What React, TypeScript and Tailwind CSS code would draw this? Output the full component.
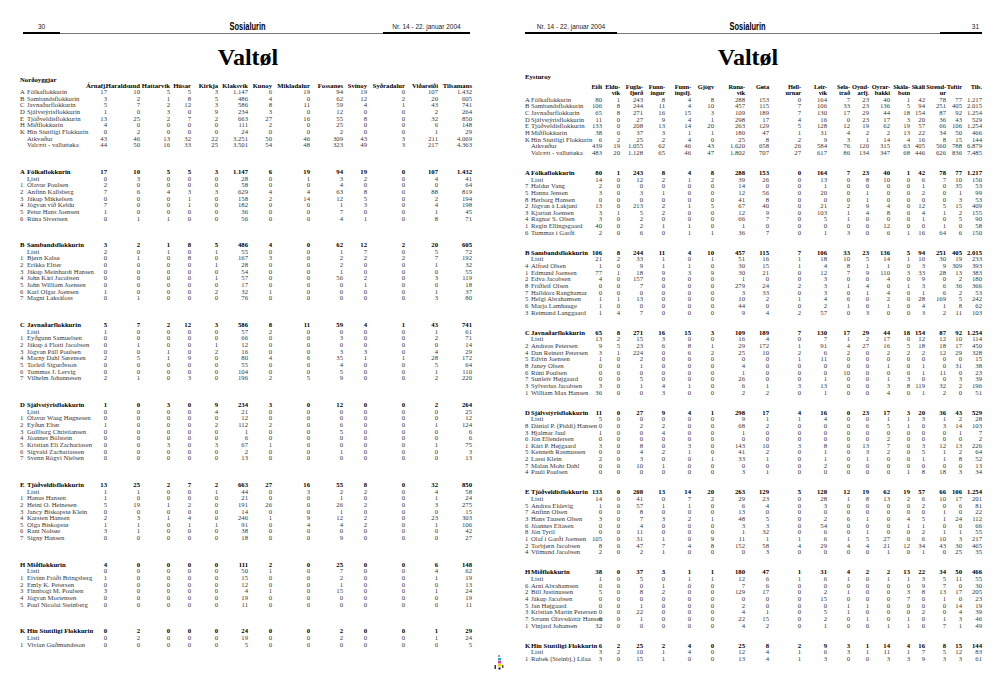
import React from 'react';

type Line = [string, string, string];
type Section = { head: Line; rows: Line[] };

// column templates (label column + one column per municipality)
const L_GRID = 'grid-cols-[68px_19px_33px_30px_21px_27px_30px_24px_38px_33px_24px_38px_33px_34px]';
const R_GRID =
  'grid-cols-[68px_9px_18px_23px_22px_26px_23px_31px_24px_32px_26px_23px_19px_21px_20px_15px_21px_16px_20px]';

const NORTH_COLS = [
  'Árnafj.', 'Haraldsund', 'Hattarvík', 'Húsar', 'Kirkja', 'Klaksvík', 'Kunoy',
  'Mikladalur', 'Fossanes', 'Svínoy', 'Syðradalur', 'Viðareiði', 'Tilsamans',
];

const NORTH_SUM: Line[] = [
  ['A', 'Fólkaflokkurin', '17 10 5 5 3 1.147 6 19 94 19 0 107 1.432'],
  ['B', 'Sambandsflokkurin', '3 2 1 8 5 486 4 0 62 12 2 20 605'],
  ['C', 'Javnaðarflokkurin', '5 7 2 12 3 586 8 11 59 4 1 43 741'],
  ['D', 'Sjálvstýrisflokkurin', '1 0 3 0 9 234 3 0 12 0 0 2 264'],
  ['E', 'Tjóðveldisflokkurin', '13 25 2 7 2 663 27 16 55 8 0 32 850'],
  ['H', 'Miðflokkurin', '4 0 0 0 0 111 2 0 25 0 0 6 148'],
  ['K', 'Hin Stuttligi Flokkurin', '0 2 0 0 0 24 0 0 2 0 0 1 29'],
  ['', 'Atkvøður', '43 46 13 32 22 3.251 50 46 309 43 3 211 4.069'],
  ['', 'Valrætt - valluttøka', '44 50 16 33 25 3.501 54 48 323 49 3 217 4.363'],
];

const NORTH: Section[] = [
  {
    head: NORTH_SUM[0],
    rows: [
      ['', 'Listi', '0 3 0 0 0 28 0 1 3 2 0 4 41'],
      ['1', 'Ólavur Poulsen', '2 0 0 0 0 58 0 0 4 0 0 0 64'],
      ['2', 'Anfinn Kallsberg', '7 6 4 3 3 629 4 4 63 8 0 88 819'],
      ['3', 'Jákup Mikkelsen', '0 0 0 1 0 158 2 14 12 5 0 2 194'],
      ['4', 'Jógvan við Keldu', '7 0 0 1 0 182 0 0 1 3 0 4 198'],
      ['5', 'Petur Hans Joensen', '1 0 0 0 0 36 0 0 7 0 0 1 45'],
      ['6', 'Rúna Sivertsen', '0 1 1 0 0 56 0 0 4 1 0 8 71'],
    ],
  },
  {
    head: NORTH_SUM[1],
    rows: [
      ['', 'Listi', '2 0 1 0 1 55 0 0 1 7 0 5 72'],
      ['1', 'Bjørn Kalsø', '0 1 0 8 0 167 3 0 2 2 2 7 192'],
      ['2', 'Erikka Eltter', '0 0 0 0 1 28 0 0 2 0 0 1 32'],
      ['3', 'Jákup Meinhardt Hansen', '0 0 0 0 0 54 0 0 1 0 0 0 55'],
      ['4', 'John Kári Jacobsen', '0 0 0 0 1 57 0 0 56 2 0 3 119'],
      ['5', 'John William Joensen', '0 0 0 0 0 17 0 0 0 1 0 0 18'],
      ['6', 'Karl Olgar Joensen', '1 0 0 0 2 32 1 0 0 0 0 1 37'],
      ['7', 'Magni Laksáfoss', '0 1 0 0 0 76 0 0 0 0 0 3 80'],
    ],
  },
  {
    head: NORTH_SUM[2],
    rows: [
      ['', 'Listi', '1 0 0 0 0 57 2 0 0 0 0 1 61'],
      ['1', 'Eyðgunn Samuelsen', '0 0 0 0 0 66 0 0 3 0 0 2 71'],
      ['2', 'Jákup á Flotti Jacobsen', '0 1 0 0 1 12 0 0 0 0 0 0 14'],
      ['3', 'Jógvan Páll Poulsen', '0 0 1 0 2 16 0 0 3 3 0 4 29'],
      ['4', 'Marny Dahl Sørensen', '2 5 1 9 0 80 4 6 35 1 1 28 172'],
      ['5', 'Torleif Sigurðsson', '0 0 0 0 0 55 0 0 4 0 0 5 64'],
      ['6', 'Tummas J. Lervig', '0 0 0 0 0 104 0 0 5 0 0 1 110'],
      ['7', 'Vilhelm Johannesen', '2 1 0 3 0 196 2 5 9 0 0 2 220'],
    ],
  },
  {
    head: NORTH_SUM[3],
    rows: [
      ['', 'Listi', '0 0 0 0 4 21 0 0 0 0 0 0 25'],
      ['1', 'Ólavur Waag Høgnesen', '0 0 0 0 0 12 0 0 0 0 0 0 12'],
      ['2', 'Eyðun Eltør', '1 0 0 0 2 112 2 0 6 0 0 1 124'],
      ['3', 'Gullborg Christiansen', '0 0 0 0 0 1 0 0 5 0 0 0 6'],
      ['4', 'Jóannes Bólstein', '0 0 0 0 0 6 0 0 0 0 0 0 6'],
      ['5', 'Kristian Eli Zachariasen', '0 0 3 0 3 67 1 0 0 0 0 1 75'],
      ['6', 'Sigvald Zachariassen', '0 0 0 0 0 2 0 0 1 0 0 0 3'],
      ['7', 'Svenn Rógvi Nielsen', '0 0 0 0 0 13 0 0 0 0 0 0 13'],
    ],
  },
  {
    head: NORTH_SUM[4],
    rows: [
      ['', 'Listi', '1 1 0 0 1 44 0 3 2 2 0 4 58'],
      ['1', 'Hanus Hansen', '1 0 0 0 0 21 0 0 1 0 0 1 24'],
      ['2', 'Heini O. Heinesen', '5 19 1 2 0 191 26 0 26 2 0 3 275'],
      ['3', 'Jancy Biskopstø Klein', '0 0 0 0 0 14 0 0 1 0 0 0 15'],
      ['4', 'Karsten Hansen', '2 3 1 4 0 246 1 9 12 2 0 23 303'],
      ['5', 'Olga Biskopstø', '1 1 0 1 1 91 0 4 4 2 0 1 106'],
      ['6', 'Rani Nolsøe', '3 1 0 0 0 38 0 0 0 0 0 0 42'],
      ['7', 'Signy Hansen', '0 0 0 0 0 18 0 0 9 0 0 0 27'],
    ],
  },
  {
    head: NORTH_SUM[5],
    rows: [
      ['', 'Listi', '0 0 0 0 0 50 1 0 7 0 0 4 62'],
      ['1', 'Eivinn Fróði Bringsberg', '1 0 0 0 0 15 0 0 2 0 0 1 19'],
      ['2', 'Emly K. Petersen', '0 0 0 0 0 12 0 0 1 0 0 0 13'],
      ['3', 'Finnbogi M. Poulsen', '3 0 0 0 0 4 1 0 15 0 0 1 24'],
      ['4', 'Jógvan Mortensen', '0 0 0 0 0 19 0 0 0 0 0 0 19'],
      ['5', 'Poul Nicolai Steinberg', '0 0 0 0 0 11 0 0 0 0 0 0 11'],
    ],
  },
  {
    head: NORTH_SUM[6],
    rows: [
      ['', 'Listi', '0 2 0 0 0 19 0 0 2 0 0 1 24'],
      ['1', 'Vivian Guðmundsson', '0 0 0 0 0 5 0 0 0 0 0 0 5'],
    ],
  },
];

const EAST_COLS: [string, string][] = [
  ['Eiði', ''], ['Eldu-', 'vík'], ['Fugla-', 'fjørð'], ['Funn-', 'ingur'], ['Funn-', 'ingsfj.'],
  ['Gjógv', ''], ['Runa-', 'vík'], ['Gøta', ''], ['Hell-', 'urnar'], ['Leir-', 'vík'],
  ['Sela-', 'trað'], ['Oynd-', 'arfj.'], ['Oyrar-', 'bakki'], ['Skála-', 'botn'], ['Skáli', ''],
  ['Strend-', 'ur'], ['Toftir', ''], ['Tils.', ''],
];

const EAST_SUM: Line[] = [
  ['A', 'Fólkaflokkurin', '80 1 243 8 4 8 288 153 0 164 7 23 40 1 42 78 77 1.217'],
  ['B', 'Sambandsflokkurin', '106 8 244 11 4 10 457 115 7 106 33 23 136 5 94 251 405 2.015'],
  ['C', 'Javnaðarflokkurin', '65 8 271 16 15 3 109 189 7 130 17 29 44 18 154 87 92 1.254'],
  ['D', 'Sjálvstýrisflokkurin', '11 0 27 9 4 1 298 17 4 16 0 23 17 3 20 36 43 529'],
  ['E', 'Tjóðveldisflokkurin', '133 0 208 13 14 20 263 129 5 128 12 19 62 19 57 66 106 1.254'],
  ['H', 'Miðflokkurin', '38 0 37 3 1 1 180 47 1 31 4 2 2 13 22 34 50 466'],
  ['K', 'Hin Stuttligi Flokkurin', '6 2 25 2 4 0 25 8 2 9 3 1 14 4 16 8 15 144'],
  ['', 'Atkvøður', '439 19 1.055 62 46 43 1.620 658 26 584 76 120 315 63 405 560 788 6.879'],
  ['', 'Valrætt - valluttøka', '483 20 1.128 65 46 47 1.802 707 27 617 86 134 347 68 446 626 836 7.485'],
];

const EAST: Section[] = [
  {
    head: EAST_SUM[0],
    rows: [
      ['', 'Listi', '14 0 12 2 1 2 39 26 0 13 0 8 10 0 6 7 10 150'],
      ['7', 'Haldur Vang', '2 0 0 0 0 0 14 0 0 1 0 0 0 0 1 0 35 53'],
      ['5', 'Hanna Jensen', '3 0 3 1 0 0 12 56 0 20 0 1 0 0 2 0 1 99'],
      ['8', 'Herborg Hansen', '0 0 0 0 0 0 41 8 0 0 0 1 0 0 0 0 3 53'],
      ['2', 'Jógvan á Lakjuni', '13 0 213 2 1 5 67 40 0 21 2 9 4 0 12 5 15 409'],
      ['3', 'Kjartan Joensen', '3 1 5 2 0 0 12 9 0 103 1 4 8 0 4 1 2 155'],
      ['4', 'Ragnar S. Olsen', '3 0 2 0 0 0 66 7 0 5 1 0 0 0 1 0 5 90'],
      ['1', 'Regin Ellingsgaard', '40 0 2 1 1 0 1 0 0 0 0 0 12 0 0 1 0 58'],
      ['6', 'Tummas í Garði', '2 0 6 0 1 1 36 7 0 1 3 0 6 1 16 64 6 150'],
    ],
  },
  {
    head: EAST_SUM[1],
    rows: [
      ['', 'Listi', '21 2 33 1 0 1 51 16 1 18 10 5 14 1 10 30 19 233'],
      ['4', 'Alfred Olsen', '1 0 9 1 1 0 30 15 1 4 8 1 1 0 3 9 309 393'],
      ['1', 'Edmund Joensen', '77 1 18 9 3 9 30 21 0 12 7 9 110 3 33 28 13 383'],
      ['2', 'Edva Jacobsen', '4 0 157 0 0 0 1 0 0 3 0 0 4 0 9 0 2 180'],
      ['8', 'Fríðleif Olsen', '0 0 7 0 0 0 279 24 2 3 1 4 0 1 3 6 36 366'],
      ['7', 'Halldóra Ranghamar', '0 0 0 0 0 0 3 33 0 3 0 1 4 0 1 6 2 53'],
      ['5', 'Helgi Abrahamsen', '1 1 13 0 0 0 10 2 1 4 6 0 2 0 28 169 5 242'],
      ['6', 'Marja Lamhauge', '1 0 0 0 0 0 44 0 0 2 1 0 1 0 4 1 8 62'],
      ['3', 'Reimund Langgaard', '1 4 7 0 0 0 9 4 2 57 0 3 0 0 3 2 11 103'],
    ],
  },
  {
    head: EAST_SUM[2],
    rows: [
      ['', 'Listi', '13 2 15 3 0 0 16 4 0 7 1 2 17 0 12 12 10 114'],
      ['2', 'Andreas Petersen', '9 5 23 6 8 1 29 172 1 91 4 27 16 5 18 18 17 450'],
      ['4', 'Dan Reinert Petersen', '3 1 224 0 6 2 25 10 2 6 2 0 2 2 2 12 29 328'],
      ['5', 'Edvin Joensen', '1 0 2 0 0 0 0 0 1 11 0 0 0 0 0 0 0 15'],
      ['8', 'Janey Olsen', '0 0 1 0 0 0 4 0 0 0 0 0 1 0 1 0 31 38'],
      ['6', 'Rúni Poulsen', '0 0 0 0 0 0 1 0 0 0 10 0 0 0 1 11 0 23'],
      ['7', 'Sunleiv Højgaard', '0 0 5 0 0 0 26 0 0 1 0 0 1 3 0 0 3 39'],
      ['3', 'Sylverius Jacobsen', '3 0 1 4 1 0 6 1 3 13 0 0 3 8 119 32 2 196'],
      ['1', 'William Max Hansen', '36 0 0 3 0 0 2 2 0 1 0 0 4 0 1 2 0 51'],
    ],
  },
  {
    head: EAST_SUM[3],
    rows: [
      ['', 'Listi', '5 0 0 0 0 0 9 1 1 4 0 0 1 1 3 1 2 28'],
      ['8', 'Dánial P. (Piddi) Hansen', '0 0 2 2 0 0 68 2 0 0 0 6 5 1 0 3 14 103'],
      ['3', 'Hjalmar Juul', '1 0 0 4 0 0 1 0 0 0 0 0 0 0 0 0 1 7'],
      ['6', 'Jón Ellendersen', '0 0 0 0 0 0 0 0 0 0 0 0 2 0 0 0 0 2'],
      ['1', 'Kári P. Højgaard', '3 0 8 0 3 0 143 10 3 8 0 13 7 0 3 12 13 226'],
      ['5', 'Kenneth Rasmussen', '0 0 4 2 1 0 41 2 0 1 0 3 2 0 5 1 2 64'],
      ['2', 'Lassi Klein', '2 0 3 0 0 1 33 1 0 1 0 1 0 0 1 1 8 52'],
      ['7', 'Malan Mohr Dahl', '0 0 10 1 0 0 0 0 0 2 0 0 0 0 0 0 0 13'],
      ['4', 'Pauli Poulsen', '0 0 0 0 0 0 3 1 0 0 0 0 0 1 8 18 3 34'],
    ],
  },
  {
    head: EAST_SUM[4],
    rows: [
      ['', 'Listi', '14 0 41 0 7 2 29 23 0 28 1 8 13 2 6 10 17 201'],
      ['5', 'Andrea Eldevig', '1 0 57 1 1 0 6 4 0 3 0 0 0 0 2 0 6 81'],
      ['7', 'Anfinn Olsen', '0 0 8 0 0 0 13 0 0 0 0 0 0 0 0 1 0 22'],
      ['3', 'Hans Tausen Olsen', '3 0 7 3 2 1 48 5 0 2 6 1 0 4 5 1 24 112'],
      ['6', 'Jóannes Eliasen', '0 0 4 0 0 0 3 3 0 54 0 0 0 1 1 0 0 66'],
      ['8', 'Jón Tyril', '0 0 11 0 0 0 1 32 0 6 0 1 0 0 2 1 1 55'],
      ['1', 'Olaf í Garði Joensen', '105 0 31 1 0 9 11 1 1 6 1 5 27 0 6 10 3 217'],
      ['2', 'Torbjørn Jacobsen', '8 0 47 7 4 8 152 58 4 29 4 4 21 12 34 43 30 465'],
      ['4', 'Vilmund Jacobsen', '2 0 2 1 0 0 0 3 0 0 0 0 1 0 1 0 25 35'],
    ],
  },
  {
    head: EAST_SUM[5],
    rows: [
      ['', 'Listi', '1 0 5 0 1 1 12 6 1 6 1 0 1 1 3 5 11 55'],
      ['6', 'Arni Abrahamsen', '0 0 0 1 0 0 7 6 0 0 0 0 0 0 9 7 0 30'],
      ['2', 'Bill Justinussen', '5 0 8 2 0 0 129 17 0 2 1 0 0 3 8 13 17 205'],
      ['4', 'Jákup Jacobsen', '0 0 0 0 0 0 0 0 0 15 0 0 0 7 0 1 0 23'],
      ['5', 'Jan Højgaard', '0 0 1 0 0 0 2 0 0 0 1 1 0 0 0 0 14 19'],
      ['3', 'Kristian Martin Petersen', '0 0 22 0 0 0 4 1 0 5 1 0 0 0 2 0 4 39'],
      ['7', 'Sæunn Ólavsdóttir Hansen', '0 0 1 0 0 0 22 15 0 2 0 1 0 1 0 1 3 46'],
      ['1', 'Vinjard Johansen', '32 0 0 0 0 0 4 2 0 1 0 0 1 1 0 7 1 49'],
    ],
  },
  {
    head: EAST_SUM[6],
    rows: [
      ['', 'Listi', '3 2 10 1 4 0 12 4 1 6 3 1 11 1 7 5 12 83'],
      ['1', 'Rubek (Steinbj.) Lilaa', '3 0 15 1 0 0 13 4 1 3 0 0 3 3 9 3 3 61'],
    ],
  },
];

function DataRow({ grid, line, bold, pre }: { grid: string; line: Line; bold?: boolean; pre: string }) {
  const [p, name, vals] = line;
  return (
    <div className={`grid ${grid} h-[6.67px] leading-[6.67px] ${bold ? 'font-bold text-black' : 'text-[#363636]'}`}>
      <div className="whitespace-nowrap">
        <span className={`inline-block ${pre}`}>{p}</span>
        {name}
      </div>
      {vals.split(' ').map((v, i) => (
        <div key={i} className="flex justify-end">
          <span className="shrink-0 whitespace-nowrap">{v}</span>
        </div>
      ))}
    </div>
  );
}

function Logo() {
  return (
    <div className="w-[37px] flex justify-center border-b border-[#777] pb-[1px]">
      <span className="inline-block scale-x-[0.68] text-[11px] leading-[11px] font-bold text-black [font-family:'Liberation_Sans',Arial,sans-serif]">
        Sosialurin
      </span>
    </div>
  );
}

function Title({ pad }: { pad: string }) {
  return (
    <div className={`mt-[11px] text-center text-[24px] leading-[24px] font-bold text-black ${pad}`}>Valtøl</div>
  );
}

function LeftPage() {
  return (
    <div className="w-[500px] pl-[20px]">
      <div className="ml-[3px] w-[447px] h-[34px] flex items-end text-[6.5px] leading-[8px] text-[#222] [font-family:'Liberation_Sans',Arial,sans-serif]">
        <div className="w-[37px] border-b-2 border-black text-center pb-[1px]">30</div>
        <div className="w-[169px] border-b border-[#777]" />
        <Logo />
        <div className="flex-1 border-b border-[#777]" />
        <div className="w-[87px] border-b-2 border-black text-center pb-[1px] whitespace-nowrap">
          Nr. 14 - 22. januar 2004
        </div>
      </div>
      <div className="w-[452px]">
        <Title pad="pl-[4px]" />
      </div>

      <div className="mt-[7.7px] w-[452px] text-[6.7px]">
        <div className="h-[6.67px] leading-[6.67px] font-bold text-black">Norðoyggjar</div>
        <div className={`grid ${L_GRID} h-[5.67px] leading-[6.67px] font-bold text-black`}>
          <div />
          {NORTH_COLS.map((c) => (
            <div key={c} className="flex justify-end">
              <span className="shrink-0 whitespace-nowrap">{c}</span>
            </div>
          ))}
        </div>
        {NORTH_SUM.map((l) => (
          <DataRow key={l[1]} grid={L_GRID} line={l} pre="w-[7px]" />
        ))}
        {NORTH.map((s) => (
          <div key={s.head[1]} className="mt-[20px]">
            <DataRow grid={L_GRID} line={s.head} pre="w-[7px]" bold />
            {s.rows.map((l) => (
              <DataRow key={l[1]} grid={L_GRID} line={l} pre="w-[7px]" />
            ))}
          </div>
        ))}
      </div>
    </div>
  );
}

function RightPage() {
  return (
    <div className="w-[500px] pl-[25px]">
      <div className="w-[457px] h-[34px] flex items-end text-[6.5px] leading-[8px] text-[#222] [font-family:'Liberation_Sans',Arial,sans-serif]">
        <div className="w-[92px] border-b-2 border-black text-center pb-[1px] whitespace-nowrap">
          Nr. 14 - 22. januar 2004
        </div>
        <div className="w-[112px] border-b border-[#777]" />
        <Logo />
        <div className="flex-1 border-b border-[#777]" />
        <div className="w-[42px] border-b-2 border-black text-right pr-[3px] pb-[1px]">31</div>
      </div>
      <div className="w-[457px]">
        <Title pad="pr-[11px]" />
      </div>

      <div className="mt-[4.7px] w-[457px] text-[6.7px]">
        <div className="h-[6.67px] leading-[6.67px] font-bold text-black">Eysturoy</div>
        <div
          className={`grid ${R_GRID} mt-[3.3px] h-[13px] leading-[6.5px] text-[6.4px] tracking-[-0.1px] font-bold text-black`}
        >
          <div />
          {EAST_COLS.map(([a, b], i) => (
            <div key={i} className="flex flex-col items-end">
              <span className="shrink-0 whitespace-nowrap">{a}</span>
              <span className="shrink-0 whitespace-nowrap">{b}</span>
            </div>
          ))}
        </div>
        {EAST_SUM.map((l) => (
          <DataRow key={l[1]} grid={R_GRID} line={l} pre="w-[6px]" />
        ))}
        {EAST.map((s) => (
          <div key={s.head[1]} className="mt-[13.33px]">
            <DataRow grid={R_GRID} line={s.head} pre="w-[6px]" bold />
            {s.rows.map((l) => (
              <DataRow key={l[1]} grid={R_GRID} line={l} pre="w-[6px]" />
            ))}
          </div>
        ))}
      </div>
    </div>
  );
}

// small colour registration mark printed in the gutter
function RegMark() {
  return (
    <svg className="absolute left-[494px] top-[655px]" width="10" height="16" viewBox="0 0 10 16">
      <rect x="4" y="0" width="2" height="2" fill="#9a9a9a" />
      <rect x="4" y="3" width="3" height="2.5" fill="#2aa6df" />
      <rect x="4" y="6" width="3" height="2.5" fill="#e23d97" />
      <rect x="4" y="9" width="3" height="2.5" fill="#f1d400" />
      <rect x="0.5" y="10" width="1.5" height="4" fill="#333" />
      <rect x="4.5" y="12.5" width="2" height="2" fill="#111" />
      <rect x="8" y="10" width="1.5" height="3" fill="#555" />
    </svg>
  );
}

export default function App() {
  return (
    <div className="relative flex w-[1000px] h-[673px] overflow-hidden bg-white [font-family:'Liberation_Serif','Times_New_Roman',serif]">
      <LeftPage />
      <RightPage />
      <RegMark />
    </div>
  );
}
